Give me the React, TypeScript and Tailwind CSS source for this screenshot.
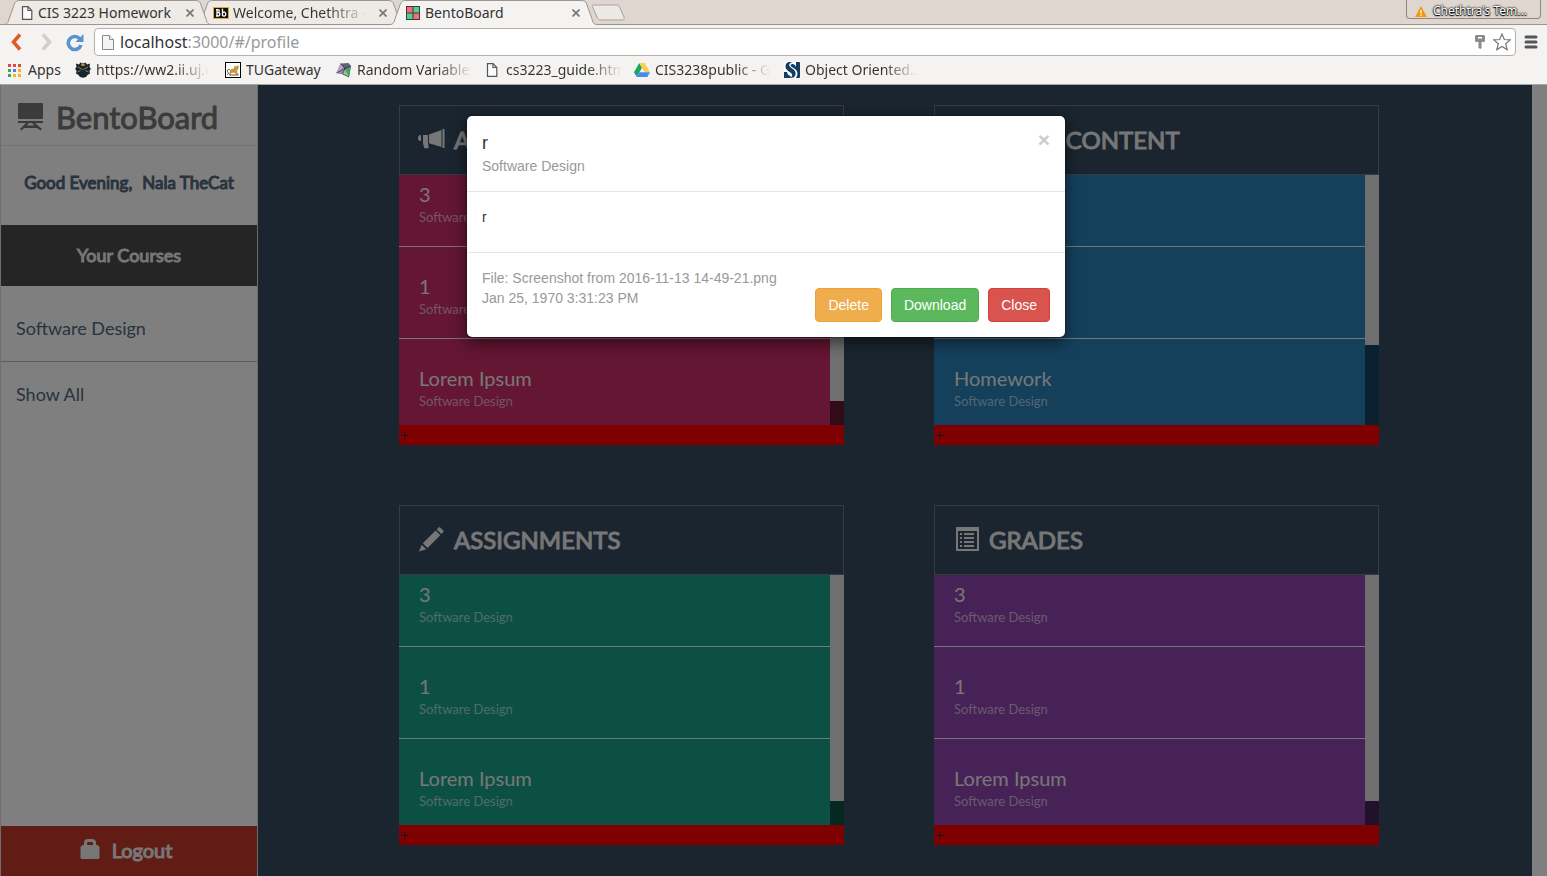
import type { ReactNode } from 'react';

/* ---------- Browser icons ---------- */

function PageIcon({ className = 'h-[14px] w-3' }: { className?: string }) {
  return (
    <svg viewBox="0 0 12 14" className={`shrink-0 ${className}`} fill="#fbfbfb" stroke="#555" strokeWidth="1.2">
      <path d="M1.5 .7H7l3.8 3.8v8.8H1.5z" />
      <path d="M7 .7v3.8h3.8" fill="none" />
    </svg>
  );
}

function BlackboardBadge() {
  return (
    <svg viewBox="0 0 16 12" className="h-3 w-4 shrink-0">
      <rect x=".5" y=".5" width="15" height="11" fill="#111" stroke="#e0a82e" />
      <g fill="none" stroke="#fff" strokeWidth="1.3">
        <path d="M3 2.6h1.800a1.500 1.500 0 0 1 0 3H4h1.200a1.700 1.700 0 0 1 0 3.400H3M4 2.600v6.400" />
        <path d="M8.700 2.300H9.500v6.700M9.500 5.800c1-1.200 3.300-.9 3.300 1.300s-2.300 2.500-3.300 1.300" />
      </g>
    </svg>
  );
}

function BentoIcon() {
  return (
    <svg viewBox="0 0 14 14" className="mr-px size-[14px] shrink-0">
      <rect width="14" height="14" fill="#333d48" />
      <path d="M1 1h5.500v5.500H1zM7.500 7.500H13V13H7.500z" fill="#ff6b6b" />
      <path d="M7.500 1H13v5.500H7.500zM1 7.500h5.500V13H1z" fill="#4fd08c" />
    </svg>
  );
}

function AppsIcon() {
  return (
    <svg viewBox="0 0 13 13" className="size-[13px] shrink-0">
      <path d="M0 0h3v3H0zM5 0h3v3H5zM10 0h3v3h-3z" fill="#e8453c" />
      <path d="M0 5h3v3H0zM0 10h3v3H0z" fill="#34a853" />
      <path d="M5 5h3v3H5z" fill="#4285f4" />
      <path d="M10 5h3v3h-3zM5 10h3v3H5zM10 10h3v3h-3z" fill="#f9b50b" />
    </svg>
  );
}

function CrestIcon() {
  return (
    <svg viewBox="0 0 16 16" className="size-4 shrink-0">
      <path d="M1 1.500l3 1L5.500.500l2.500 1 2.500-1L12 2.500l3-1-.5 3.500L16 7l-1.500 1.500.5 3-2.500 1.500-1.500 2-3 .800-3-.800-1.500-2L1 11.500l.5-3L0 7l1.500-2z" fill="#1c242b" />
      <path d="M3 5l4.500 2.500M13 5L8.500 7.500M2.500 10l3-1.500M13.500 10l-3-1.500" stroke="#8f9599" strokeWidth=".8" />
      <path d="M6 1.800h4L9.500 4h-3z" fill="#b98b3c" />
    </svg>
  );
}

function OwlIcon() {
  return (
    <svg viewBox="0 0 16 16" className="size-4 shrink-0">
      <rect x=".5" y=".5" width="15" height="15" fill="#fff" stroke="#000" />
      <path d="M9.500 3.500l1.500 1 2.500-1.500v4L12 8.500l.5 2.500 1.500 1.500h-3L9.500 10.500l-3 .5L5.500 12.500H4L5 9.500 6 7l3-.5z" fill="#c7963e" />
      <path d="M5.500 8.500C3 6 1.500 8.500 3 10.500c1 1.200 0 2-1 2M4 13h9.500" stroke="#4a3d28" strokeWidth=".9" fill="none" />
    </svg>
  );
}

function GemIcon() {
  return (
    <svg viewBox="0 0 16 16" className="size-4 shrink-0">
      <path d="M4.500 1.500L12.500 1 15 4 13 15 6.500 12 .5 11z" fill="#67607c" />
      <path d="M.5 11L4.500 1.500 8 6z" fill="#b9a5cc" />
      <path d="M15 4l-2 11L9 7z" fill="#48a06e" />
      <path d="M.5 11L8 6l1.500 4-3 2z" fill="#a488c2" />
      <path d="M9 7l4 8-6.500-3z" fill="#8cce8d" />
      <path d="M4.500 1.500L9 6.500l6-2.500M9 6.500L6.500 12 13 15M.5 11L9 6.500" stroke="#222" strokeWidth=".6" fill="none" />
    </svg>
  );
}

function DriveIcon() {
  return (
    <svg viewBox="0 0 16 14" className="h-[14px] w-4 shrink-0">
      <path d="M5.300 0L0 9.300 2.700 14 8 4.700z" fill="#1fa463" />
      <path d="M5.300 0h5.400L16 9.300h-5.400z" fill="#ffcf48" />
      <path d="M5.400 9.300H16L13.300 14H2.700z" fill="#4688f4" />
    </svg>
  );
}

function SIcon() {
  return (
    <svg viewBox="0 0 16 16" className="size-4 shrink-0">
      <rect width="16" height="16" rx="1" fill="#fff" />
      <path d="M12 0h3a1 1 0 0 1 1 1v14a1 1 0 0 1-1 1h-3c2.500-4 1.500-7-1-9-1.500-1.200-3-1.700-3.800-2.500C6 3.300 7 1.500 9 2c1.500.4 2.300 1.500 3 3z" fill="#123c62" />
      <path d="M5 0h3C5.500 1 4.500 3 6 4.800c1.500 1.700 5 2.700 5.500 6C12 14 10 16 7 16H5c3-.5 4-2.500 2.500-4.500C6 9.700 2 8.500 1.500 5 1.200 2 3 .3 5 0z" fill="#123c62" />
      <path d="M0 10h3c.5 2.500 2 4 4 4l-1 2H0z" fill="#123c62" />
    </svg>
  );
}

/* ---------- Dashboard icons ---------- */

function EaselIcon() {
  return (
    <svg viewBox="0 0 27 28" className="h-7 w-[27px] shrink-0" fill="#777">
      <rect x="1" y="0" width="25" height="16" rx="1" />
      <rect x="1" y="18" width="25" height="2" />
      <path d="M9 20h3l-2.200 2.500h7.400L15 20h3l7 6-1.600 1.600-3.400-2.600H7.200l-2.800 2.600L3 26z" />
    </svg>
  );
}

function BullhornIcon() {
  return (
    <svg viewBox="0 0 27 22" className="h-[22px] w-[27px] shrink-0" fill="currentColor">
      <path d="M24.500 1h2v19h-2zM23.500 2v17L11 15.200V6.500zM5 7h5v8.200l.8 5H6.300L5 15.500zM3 7v6C1.500 13.500 0 12 0 10s1.500-3.500 3-3z" />
    </svg>
  );
}

function PencilIcon() {
  return (
    <svg viewBox="0 0 26 26" className="size-[26px] shrink-0" fill="currentColor">
      <path d="M20.500 1.600c.5-.5 1.200-.5 1.700 0l3 3c.5.500.5 1.200 0 1.700l-1.800 1.800-4.700-4.700zM17.600 4.500l4.700 4.700L9.500 22l-4.700-4.700zM3.700 18.700l4.500 4.500L1 25.500z" />
    </svg>
  );
}

function ListIcon() {
  return (
    <svg viewBox="0 0 24 24" className="ml-[3px] size-6 shrink-0">
      <path fillRule="evenodd" fill="currentColor" d="M0 0h23v24H0zM2 4v18h19V4z" />
      <path fill="currentColor" d="M4 6h2v2H4zm4 0h10v2H8zM4 10h2v2H4zm4 0h10v2H8zM4 14h2v2H4zm4 0h10v2H8zM4 18h2v2H4zm4 0h10v2H8z" />
    </svg>
  );
}

function LockIcon() {
  return (
    <svg viewBox="0 0 20 20" className="mb-0.5 size-5 shrink-0" fill="currentColor">
      <path fillRule="evenodd" d="M4 6V4a4 4 0 0 1 4-4h4a4 4 0 0 1 4 4v2h1.500L19.500 8v11l-1 1h-17l-1-1V8l2-2zM7 6h6V4.500C13 3.500 12.500 3 11.500 3h-3C7.500 3 7 3.500 7 4.500z" />
    </svg>
  );
}

/* ---------- Browser chrome ---------- */

function TabEdge({ fill, flip = false }: { fill: string; flip?: boolean }) {
  return (
    <svg viewBox="0 0 16 25" className={`h-[25px] w-4 shrink-0 ${flip ? '-scale-x-100' : ''}`}>
      <path d="M0 25C4 24 4 22 5 19L10 5C11 2 12 1 16 1V25z" fill={fill} />
      <path d="M0 24.500C4 24 4 22 5 19L10 5C11 2 12 .5 16 .5" fill="none" stroke="#9c958e" />
      {fill !== '#f5f3f1' && <path d="M0 24.500h16" stroke="#9c958e" />}
    </svg>
  );
}

function Tab({ icon, title, active = false, faded = false, layer }: { icon: ReactNode; title: string; active?: boolean; faded?: boolean; layer: string }) {
  return (
    <div className={`relative -mr-[14px] flex h-[25px] w-[207px] ${layer}`}>
      <TabEdge fill={active ? '#f5f3f1' : '#eeebe7'} />
      <div className={`flex min-w-0 flex-1 items-center border-t border-[#9c958e] ${active ? 'bg-[#f5f3f1]' : 'border-b bg-[#eeebe7]'}`}>
        {icon}
        <span className={`ml-1 min-w-0 flex-1 overflow-hidden whitespace-nowrap ${faded ? 'bg-linear-to-r from-[#333] from-70% to-transparent bg-clip-text text-transparent' : ''}`}>{title}</span>
        <button type="button" aria-label="Close tab" className="-mr-[3px] ml-2 flex size-4 shrink-0 items-center justify-center">
          <svg viewBox="0 0 8 8" className="size-2" stroke="#777" strokeWidth="1.700"><path d="M.5 .5l7 7M7.500 .5l-7 7" /></svg>
        </button>
      </div>
      <TabEdge fill={active ? '#f5f3f1' : '#eeebe7'} flip />
    </div>
  );
}

function Bookmark({ icon, title, width, faded = false }: { icon: ReactNode; title: string; width: string; faded?: boolean }) {
  return (
    <a href="#" className={`flex items-center gap-[5px] ${width}`}>
      {icon}
      <span className={`min-w-0 flex-1 overflow-hidden whitespace-nowrap ${faded ? 'bg-linear-to-r from-[#333] from-70% to-transparent bg-clip-text text-transparent' : ''}`}>{title}</span>
    </a>
  );
}

function BrowserChrome() {
  return (
    <header className="bg-[#f5f3f1] font-['Noto_Sans',sans-serif] text-[14px] leading-5 text-[#333]">
      <div className="flex h-[25px] justify-between bg-[#ded6cf] bg-linear-to-t from-[#9c958e] from-[1px] to-[#ded6cf] to-[1px]">
        <div className="flex pl-1">
          <Tab layer="z-10" icon={<PageIcon className="mx-px h-[14px] w-3" />} title="CIS 3223 Homework" />
          <Tab layer="z-0" icon={<BlackboardBadge />} title="Welcome, Chethtra - " faded />
          <Tab layer="z-20" icon={<BentoIcon />} title="BentoBoard" active />
          <button type="button" aria-label="New tab" className="ml-2">
            <svg viewBox="0 0 34 17" className="h-[17px] w-[34px]" fill="#ece8e4" stroke="#aaa39c">
              <path d="M3 1h22c2 0 3 .5 4 3l4 9c.6 2 0 3-2 3H10c-2 0-3-.5-4-3L2 4C1 2 1 1 3 1z" />
            </svg>
          </button>
        </div>
        <button type="button" className="mr-1.5 flex h-[19px] w-[135px] items-center gap-1.5 rounded-b border border-t-0 border-[#8f8881] px-2 pt-1 text-[12px] text-white [text-shadow:0_0_2px_#000,0_0_2px_#000,0_1px_1px_#000]">
          <svg viewBox="0 0 12 11" className="h-[11px] w-3 shrink-0"><path d="M6 0l6 11H0z" fill="#f39a10" /><path d="M6 4v3.500M6 8.500V10" stroke="#fff" strokeWidth="1.200" /></svg>
          <span className="whitespace-nowrap">Chethtra's Tem...</span>
        </button>
      </div>

      <div className="flex h-[34px] items-center pl-2 pr-[9px]">
        <button type="button" aria-label="Back" className="flex w-[15px] justify-center">
          <svg viewBox="0 0 12 18" className="h-[18px] w-3"><path d="M10 1.500L3.500 9l6.500 7.500" fill="none" stroke="#df5a26" strokeWidth="3.500" /></svg>
        </button>
        <button type="button" aria-label="Forward" className="ml-4 flex w-[15px] justify-center">
          <svg viewBox="0 0 12 18" className="h-[18px] w-3"><path d="M2 1.500L8.500 9 2 16.500" fill="none" stroke="#d1cecb" strokeWidth="3.500" /></svg>
        </button>
        <button type="button" aria-label="Reload" className="ml-[11px]">
          <svg viewBox="0 0 19 19" className="size-[19px]">
            <path d="M14.500 5.500A6.500 6.500 0 1 0 16 12" fill="none" stroke="#5b93cf" strokeWidth="3.600" />
            <path d="M18.500 1v8h-8z" fill="#5b93cf" />
          </svg>
        </button>
        <div className="ml-2.5 flex h-7 flex-1 items-center rounded-sm border border-[#b5b0ab] bg-white px-[7px]">
          <svg viewBox="0 0 12 15" className="h-[15px] w-3 shrink-0" fill="#f4f4f4" stroke="#8a8a8a"><path d="M.5 .5h7l4 4v10H.5z" /><path d="M7.500 .5v4h4" /></svg>
          <div className="ml-1.5 flex-1 text-[16px]">
            <span>localhost</span><span className="text-[#999]">:3000/#/profile</span>
          </div>
          <svg viewBox="0 0 10 14" className="h-[14px] w-2.5" fill="#8c8c8c"><path fillRule="evenodd" d="M1 0h8l1 1v5L9 7H6.500v6l-1 1-2-1V7H1L0 6V1zM3 2v1.500h4V2z" /></svg>
          <svg viewBox="0 0 18 18" className="-mr-[3px] ml-2 size-[18px]" fill="#fff" stroke="#777" strokeWidth="1.200"><path d="M9 1l2.300 5.500 6 .4-4.600 3.800 1.500 5.900L9 13.400l-5.200 3.200 1.500-5.900L.7 6.900l6-.4z" /></svg>
        </div>
        <button type="button" aria-label="Menu" className="ml-2">
          <svg viewBox="0 0 14 14" className="size-[14px]" stroke="#555" strokeWidth="3" strokeLinecap="round"><path d="M2 2h10M2 7h10M2 12h10" /></svg>
        </button>
      </div>

      <nav className="flex h-[26px] items-center border-b border-[#aaa5a0] pb-[3px] pl-2">
        <a href="#" className="mr-3 flex w-[55px] items-center gap-[7px]"><AppsIcon />Apps</a>
        <Bookmark icon={<CrestIcon />} title="https://ww2.ii.uj.edu" width="w-[134px] mr-4" faded />
        <Bookmark icon={<OwlIcon />} title="TUGateway" width="w-[99px] mr-3" />
        <Bookmark icon={<GemIcon />} title="Random Variables" width="w-[136px] mr-3.5" faded />
        <Bookmark icon={<PageIcon className="mr-[3px] h-[14px] w-3" />} title="cs3223_guide.html" width="w-[136px] mr-3" faded />
        <Bookmark icon={<DriveIcon />} title="CIS3238public - Google" width="w-[136px] mr-3.5" faded />
        <Bookmark icon={<SIcon />} title="Object Oriented..." width="w-[134px]" faded />
      </nav>
    </header>
  );
}

/* ---------- Dashboard ---------- */

// Headings use the regular face thickened by a stroke.
const HEAVY = 'font-normal [-webkit-text-stroke:1px_currentColor]';

function Sidebar() {
  return (
    <aside className="flex w-[258px] shrink-0 flex-col border-x border-[#ddd] bg-white text-[18px] text-[#52667a]">
      <div className="flex h-[61px] items-center gap-3 border-b border-[#e7e7e7] px-4 pb-px pt-1 text-[#777]">
        <EaselIcon />
        <h1 className={`text-[31px] leading-9 ${HEAVY}`}>BentoBoard</h1>
      </div>
      <p className={`flex h-[79px] items-center justify-center gap-2.5 pb-1.5 text-[17px] ${HEAVY}`}>
        <span>Good Evening,</span>
        <span>Nala TheCat</span>
      </p>
      <h2 className={`flex h-[61px] items-center justify-center bg-[#4a4a4a] text-[#eee] ${HEAVY}`}>Your Courses</h2>
      <a href="#" className="flex h-[76px] items-center border-b border-[#bbb] px-[15px] pt-2.5">Software Design</a>
      <a href="#" className="flex h-[66px] items-center px-[15px] pb-0.5">Show All</a>
      <button type="button" className={`mt-auto flex h-[50px] items-center justify-center gap-3 bg-[#c0392b] pb-0.5 pr-1.5 text-[20px] text-[#eee] ${HEAVY}`}>
        <LockIcon />
        Logout
      </button>
    </aside>
  );
}

interface PanelProps {
  title: string;
  icon: ReactNode;
  colour: string;
  track: string;
  thumb: string;
  items: string[];
}

function Panel({ title, icon, colour, track, thumb, items }: PanelProps) {
  return (
    <section className="w-[445px]">
      <h2 className={`flex h-[70px] items-center gap-[9px] border border-[#6c7780] px-[18px] text-[24px] text-[#eee] ${HEAVY}`}>
        <span className="w-[27px] pb-[3px]">{icon}</span>
        <span>{title}</span>
      </h2>
      <div className="flex h-[250px] overflow-hidden">
        <ul className={`-mt-5 flex-1 ${colour}`}>
          {items.map((item, i) => (
            <li key={i} className="flex h-[92px] flex-col justify-center border-b border-[#eee] px-5 pt-2">
              <span className="h-[25px] text-[20px] leading-6 text-[#eee]">{item}</span>
              <span className="text-[13px] leading-5 text-white/60">Software Design</span>
            </li>
          ))}
        </ul>
        <div className={`w-3.5 ${track}`}>
          <div className={`bg-[#dedede] ${thumb}`} />
        </div>
      </div>
      <button type="button" className="block h-5 w-full bg-[#ff0000] pl-px text-left text-[14px] leading-5 text-[#333]">+</button>
    </section>
  );
}

function DetailDialog() {
  const button = 'h-[34px] rounded border px-3 text-white';
  return (
    <div className="absolute inset-0 bg-black/50 pr-[15px] pt-[30px]">
      <div role="dialog" aria-modal="true" aria-labelledby="dialog-title" className="mx-auto w-[600px] rounded-md border border-black/20 bg-white bg-clip-padding font-['Liberation_Sans',Arial,sans-serif] text-[14px] leading-5 text-[#333] shadow-[0_5px_15px_rgba(0,0,0,0.5)]">
        <div className="flex items-start justify-between border-b border-[#e5e5e5] p-[15px]">
          <div>
            <h3 id="dialog-title" className="text-[18px] leading-[25px]">r</h3>
            <p className="text-[#999]">Software Design</p>
          </div>
          <button type="button" aria-label="Close dialog" className="text-[21px] font-bold leading-[17px] text-[#ccc]">×</button>
        </div>
        <p className="h-[61px] border-b border-[#e5e5e5] p-[15px]">r</p>
        <div className="flex items-end justify-between p-[15px]">
          <p className="self-start text-[#999]">
            File: Screenshot from 2016-11-13 14-49-21.png
            <br />
            Jan 25, 1970 3:31:23 PM
          </p>
          <div className="flex gap-[9px] pt-5">
            <button type="button" className={`${button} border-[#eea236] bg-[#f0ad4e]`}>Delete</button>
            <button type="button" className={`${button} border-[#4cae4c] bg-[#5cb85c]`}>Download</button>
            <button type="button" className={`${button} border-[#d43f3a] bg-[#d9534f]`}>Close</button>
          </div>
        </div>
      </div>
    </div>
  );
}

export default function App() {
  return (
    <div className="flex min-h-screen flex-col">
      <BrowserChrome />
      <div className="relative flex flex-1 bg-[#364a5e] font-['Lato',sans-serif]">
        <Sidebar />
        <main className="flex flex-1 flex-wrap content-start justify-center gap-x-[90px] gap-y-[60px] pr-3 pt-5">
          <Panel title="ANNOUNCEMENTS" icon={<BullhornIcon />} colour="bg-[#c82c64]" track="bg-[#641632]" thumb="h-[226px]" items={['3', '1', 'Lorem Ipsum']} />
          <Panel title="CLASS CONTENT" icon={<ListIcon />} colour="bg-[#2980b9]" track="bg-[#15405c]" thumb="h-[170px]" items={['3', '1', 'Homework']} />
          <Panel title="ASSIGNMENTS" icon={<PencilIcon />} colour="bg-[#16a085]" track="bg-[#0b5043]" thumb="h-[226px]" items={['3', '1', 'Lorem Ipsum']} />
          <Panel title="GRADES" icon={<ListIcon />} colour="bg-[#8e44ad]" track="bg-[#472256]" thumb="h-[226px]" items={['3', '1', 'Lorem Ipsum']} />
        </main>
        <div className="w-[15px] shrink-0 bg-white" />
        <DetailDialog />
      </div>
    </div>
  );
}
